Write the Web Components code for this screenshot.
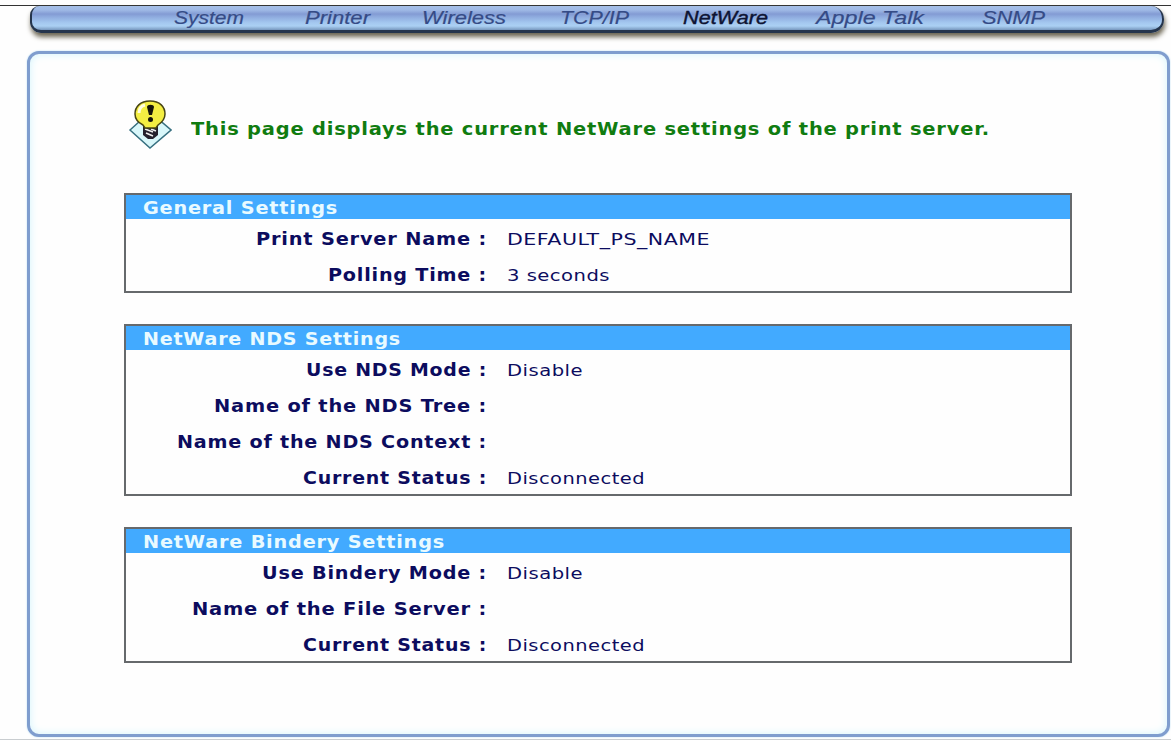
<!DOCTYPE html>
<html lang="en">
<head>
<meta charset="utf-8">
<title>Print Server - NetWare</title>
<style>
    body { margin: 0; background: #fefefe; }
</style>
</head>
<body>
<ps-page>
    <ps-nav slot="nav" current="NetWare" items="System:70,Printer:65,Wireless:84,TCP/IP:69,NetWare:85,Apple Talk:108,SNMP:63"></ps-nav>
    <ps-notice><ps-text width="799">This page displays the current NetWare settings of the print server.</ps-text></ps-notice>
    <ps-group heading="General Settings" width="195">
        <ps-row label="Print Server Name :" width="231"><ps-text width="203">DEFAULT_PS_NAME</ps-text></ps-row>
        <ps-row label="Polling Time :" width="159"><ps-text width="103">3 seconds</ps-text></ps-row>
    </ps-group>
    <ps-group heading="NetWare NDS Settings" width="258">
        <ps-row label="Use NDS Mode :" width="181"><ps-text width="76">Disable</ps-text></ps-row>
        <ps-row label="Name of the NDS Tree :" width="273"></ps-row>
        <ps-row label="Name of the NDS Context :" width="310"></ps-row>
        <ps-row label="Current Status :" width="184"><ps-text width="138">Disconnected</ps-text></ps-row>
    </ps-group>
    <ps-group heading="NetWare Bindery Settings" width="302">
        <ps-row label="Use Bindery Mode :" width="225"><ps-text width="76">Disable</ps-text></ps-row>
        <ps-row label="Name of the File Server :" width="295"></ps-row>
        <ps-row label="Current Status :" width="184"><ps-text width="138">Disconnected</ps-text></ps-row>
    </ps-group>
</ps-page>

<script>
// Text stretched horizontally to a given width
class PsText extends HTMLElement {
    constructor() {
        super();
        this.attachShadow({ mode: 'open' }).innerHTML = `
            <style>
                :host { display: inline-block; white-space: nowrap; text-align: left; }
                span { display: inline-block; transform-origin: 0 50%; }
            </style>
            <span><slot></slot></span>
        `;
    }

    connectedCallback() {
        this.fit();
    }

    fit() {
        const width = Number(this.getAttribute('width'));
        const span = this.shadowRoot.querySelector('span');
        const natural = span.getBoundingClientRect().width;
        if (!width || !natural) return;
        this.style.width = `${width}px`;
        span.style.transform = `scaleX(${width / natural})`;
        // keep the unscaled box from widening the line
        span.style.marginRight = `${Math.min(0, width - natural)}px`;
    }
}

class PsPage extends HTMLElement {
    constructor() {
        super();
        this.attachShadow({ mode: 'open' }).innerHTML = `
            <style>
                :host {
                    display: flex;
                    flex-direction: column;
                    box-sizing: border-box;
                    height: 740px;
                    overflow: hidden;
                    padding-top: 5px;
                    border-bottom: 1px solid #c9cdd0;
                    font-family: "DejaVu Sans", Verdana, sans-serif;
                    font-size: 16px;
                }
                .top { height: 46px; border-top: 1px solid #333; box-sizing: border-box; }
                main {
                    box-sizing: border-box;
                    width: 1143px;
                    height: 686px;
                    margin-left: 27px;
                    padding: 45px 95px 0 94px;
                    border: 3px solid #7f9dce;
                    border-radius: 12px;
                    background: #fefefe;
                    box-shadow: 0 0 2px #b5dcf2, inset 0 0 9px #d3f5fd;
                }
            </style>
            <div class="top"><slot name="nav"></slot></div>
            <main><slot></slot></main>
        `;
    }
}

class PsNav extends HTMLElement {
    constructor() {
        super();
        this.attachShadow({ mode: 'open' });
    }

    connectedCallback() {
        const current = this.getAttribute('current');
        const links = this.getAttribute('items').split(',').map(item => {
            const [name, width] = item.split(':');
            return `<a class="${name === current ? 'on' : ''}"><ps-text width="${width}">${name}</ps-text></a>`;
        }).join('');

        this.shadowRoot.innerHTML = `
            <style>
                :host {
                    display: grid;
                    grid-template-columns: 131px 117px 138px 123px 133px 166px 1fr;
                    box-sizing: border-box;
                    width: 1134px;
                    height: 27px;
                    margin-left: 30px;
                    padding-left: 142px;
                    border: 2px solid #25354c;
                    border-top: 0;
                    border-bottom-width: 3px;
                    border-radius: 9px 13px 13px 11px;
                    background: linear-gradient(#a5bfe8 0, #9fb9e6 4px, #839bd4 8px, #8facdf 11px, #a5c9f0 17px, #abd0f3 20px, #7797bd 24px);
                    box-shadow: 1px 4px 5px #6b6552;
                    font: italic 19px/24px "Liberation Sans", Arial, sans-serif;
                    color: #354b86;
                }
                a { white-space: nowrap; -webkit-text-stroke: 0.2px; }
                .on { color: #0d1333; -webkit-text-stroke: 0.4px #0d1333; }
            </style>
            ${links}
        `;
    }
}

class PsNotice extends HTMLElement {
    constructor() {
        super();
        this.attachShadow({ mode: 'open' }).innerHTML = `
            <style>
                :host {
                    display: flex;
                    align-items: flex-start;
                    height: 94px;
                    color: #107c10;
                    font-size: 17px;
                    font-weight: bold;
                    letter-spacing: 0.7px;
                    white-space: nowrap;
                }
                svg { flex: none; margin-left: 4px; width: 44px; height: 51px; }
                .text { margin: 20px 0 0 19px; line-height: 20px; }
            </style>
            <svg viewBox="0 0 44 51">
                <path d="M2 31 22 13 43 31 22 49z" fill="#d9f7fa" stroke="#377080" stroke-width="1.5"/>
                <path d="M15 27h15v9l-5 4h-5l-5-4z" fill="#24202c"/>
                <path d="M17 30l8 3M18 34l7 3M23 30l5 2" stroke="#eee" stroke-width="1.6"/>
                <path d="M22 2c10 0 15 6 15 13 0 6-4 9-7 11l-2 3H17l-2-3c-4-2-8-5-8-11C7 8 12 2 22 2z" fill="#f4ee42" stroke="#484513" stroke-width="1.5"/>
                <path d="M11 14c0-4 2-7 6-8" fill="none" stroke="#fffde0" stroke-width="3"/>
                <path d="M19 8c0-3 7-3 7 0l-2 8h-3z" fill="#16140a"/>
                <circle cx="22.500" cy="20.500" r="2.500" fill="#16140a"/>
            </svg>
            <div class="text"><slot></slot></div>
        `;
    }
}

class PsGroup extends HTMLElement {
    constructor() {
        super();
        this.attachShadow({ mode: 'open' });
    }

    connectedCallback() {
        this.shadowRoot.innerHTML = `
            <style>
                :host {
                    display: block;
                    margin-bottom: 31px;
                    border: 2px solid #66696c;
                    background: #fefefe;
                }
                header {
                    height: 24px;
                    padding-left: 17px;
                    background: #42aaff;
                    color: #e9faff;
                    font-size: 17px;
                    font-weight: bold;
                    line-height: 26px;
                    letter-spacing: 0.7px;
                }
            </style>
            <header><ps-text width="${this.getAttribute('width')}">${this.getAttribute('heading')}</ps-text></header>
            <slot></slot>
        `;
    }
}

class PsRow extends HTMLElement {
    constructor() {
        super();
        this.attachShadow({ mode: 'open' });
    }

    connectedCallback() {
        this.shadowRoot.innerHTML = `
            <style>
                :host {
                    display: grid;
                    grid-template-columns: 361px 1fr;
                    column-gap: 20px;
                    height: 36px;
                    line-height: 41px;
                    color: #0c0c5e;
                    white-space: nowrap;
                }
                b { font-size: 17px; text-align: right; letter-spacing: 0.7px; }
                span { line-height: 42px; letter-spacing: 0.4px; }
            </style>
            <b><ps-text width="${this.getAttribute('width')}">${this.getAttribute('label')}</ps-text></b>
            <span><slot></slot></span>
        `;
    }
}

// ps-text measures itself, so it comes after the elements that style it
customElements.define('ps-page', PsPage);
customElements.define('ps-nav', PsNav);
customElements.define('ps-notice', PsNotice);
customElements.define('ps-group', PsGroup);
customElements.define('ps-row', PsRow);
customElements.define('ps-text', PsText);
</script>
</body>
</html>
